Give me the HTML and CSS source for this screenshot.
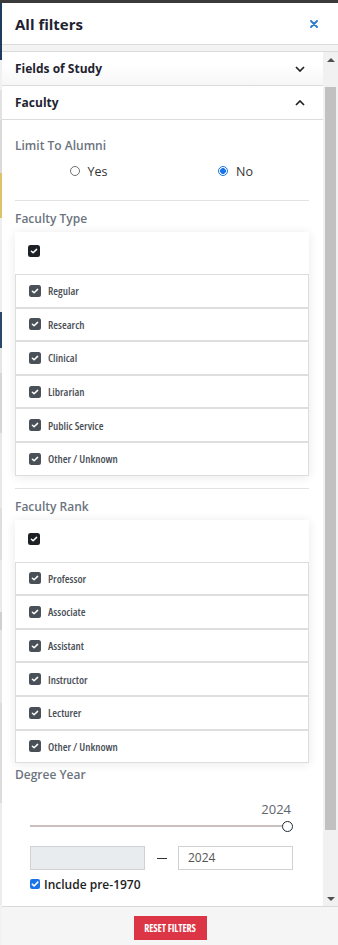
FILE: index.html
```html
<!DOCTYPE html>
<html lang="en">
<head>
<meta charset="utf-8">
<title>All filters</title>
<link rel="stylesheet" href="styles.css">
</head>
<body>
<div class="topbar"></div>
<div class="stage">
  <div class="backdrop"></div>
  <aside class="drawer">
    <header class="drawer-head">
      <h1 class="drawer-title">All filters</h1>
      <button class="close-btn" aria-label="Close">
        <svg width="8" height="8" viewBox="0 0 8 8"><path d="M1 1 L7 7 M7 1 L1 7" stroke="#2a78c8" stroke-width="1.8" stroke-linecap="round"/></svg>
      </button>
    </header>

    <div class="drawer-body">
      <div class="scroller">
        <div class="scroll-content">
          <div class="acc-row acc-closed">
            <span>Fields of Study</span>
            <svg class="chev" width="10" height="6" viewBox="0 0 10 6"><path d="M1 1 L5 5 L9 1" fill="none" stroke="#222" stroke-width="1.7"/></svg>
          </div>
          <div class="acc-row">
            <span>Faculty</span>
            <svg class="chev" width="10" height="6" viewBox="0 0 10 6"><path d="M1 5 L5 1 L9 5" fill="none" stroke="#222" stroke-width="1.7"/></svg>
          </div>

          <div class="acc-panel">
            <h2 class="group-label first">Limit To Alumni</h2>
            <div class="radios">
              <label class="radio-opt"><span class="radio"></span>Yes</label>
              <label class="radio-opt"><span class="radio on"></span>No</label>
            </div>

            <hr class="divider">

            <h2 class="group-label">Faculty Type</h2>
            <div class="check-box">
              <div class="check-all"><span class="cb dark"></span></div>
              <div class="check-row"><span class="cb"></span>Regular</div>
              <div class="check-row"><span class="cb"></span>Research</div>
              <div class="check-row"><span class="cb"></span>Clinical</div>
              <div class="check-row"><span class="cb"></span>Librarian</div>
              <div class="check-row"><span class="cb"></span>Public Service</div>
              <div class="check-row"><span class="cb"></span>Other / Unknown</div>
            </div>

            <hr class="divider second">

            <h2 class="group-label">Faculty Rank</h2>
            <div class="check-box">
              <div class="check-all"><span class="cb dark"></span></div>
              <div class="check-row"><span class="cb"></span>Professor</div>
              <div class="check-row"><span class="cb"></span>Associate</div>
              <div class="check-row"><span class="cb"></span>Assistant</div>
              <div class="check-row"><span class="cb"></span>Instructor</div>
              <div class="check-row"><span class="cb"></span>Lecturer</div>
              <div class="check-row"><span class="cb"></span>Other / Unknown</div>
            </div>

            <h2 class="group-label tight">Degree Year</h2>
            <div class="year-value">2024</div>
            <div class="slider">
              <div class="slider-track"></div>
              <div class="slider-thumb"></div>
            </div>
            <div class="year-inputs">
              <div class="year-input disabled"></div>
              <span class="dash"></span>
              <div class="year-input">2024</div>
            </div>
            <label class="pre-check"><span class="cb-blue"></span>Include pre-1970</label>
          </div>
        </div>

        <div class="scrollbar">
          <div class="sb-btn"><span class="tri up"></span></div>
          <div class="sb-track"><div class="sb-thumb"></div></div>
          <div class="sb-btn"><span class="tri down"></span></div>
        </div>
      </div>
    </div>

    <footer class="drawer-foot">
      <button class="reset-btn">RESET FILTERS</button>
    </footer>
  </aside>
</div>
</body>
</html>
```

FILE: styles.css
```css
* { box-sizing: border-box; }

html, body {
  margin: 0;
  padding: 0;
  width: 338px;
  height: 945px;
  overflow: hidden;
  font-family: "Open Sans", "Noto Sans", sans-serif;
  background: #ececec;
}

.topbar {
  height: 3px;
  background: #3a3a3a;
}

.stage {
  display: flex;
  height: 942px;
}

/* sliver of the page visible behind the drawer */
.backdrop {
  width: 2px;
  flex: none;
  background: linear-gradient(to bottom,
    #1d3c5e 0, #1d3c5e 57px,
    #f0f0f0 57px, #f0f0f0 87px,
    #e2e2e2 87px, #e2e2e2 117px,
    #dadada 117px, #dadada 170px,
    #dcc36a 170px, #dcc36a 215px,
    #efefef 215px, #efefef 309px,
    #2a4a6a 309px, #2a4a6a 345px,
    #e6e6e6 345px, #e6e6e6 370px,
    #d6d6d6 370px, #d6d6d6 430px,
    #e8e8e8 430px, #e8e8e8 505px,
    #dedede 505px, #dedede 557px,
    #eaeaea 557px, #eaeaea 609px,
    #cfcfcf 609px, #cfcfcf 627px,
    #e6e6e6 627px, #e6e6e6 700px,
    #dcdcdc 700px, #dcdcdc 800px,
    #ececec 800px, #ececec 902px,
    #f2f2f2 902px);
}

.drawer {
  flex: 1;
  display: flex;
  flex-direction: column;
  background: #fff;
}

/* header */
.drawer-head {
  height: 42px;
  flex: none;
  display: flex;
  align-items: center;
  justify-content: space-between;
  padding: 0 20px 0 13px;
  border-bottom: 1px solid #dcdcdc;
}

.drawer-title {
  margin: 0;
  font-size: 15px;
  font-weight: 700;
  color: #1e2230;
  line-height: 20px;
}

.close-btn {
  border: 0;
  background: none;
  padding: 0;
  width: 8px;
  height: 8px;
  display: flex;
}

/* body */
.drawer-body {
  flex: 1;
  min-height: 0;
  background: #f3f3f3;
  padding-top: 6px;
  display: flex;
  flex-direction: column;
}

.scroller {
  flex: 1;
  min-height: 0;
  display: flex;
  border-top: 1px solid #dadada;
  background: #fff;
}

.scroll-content {
  flex: 1;
  overflow: hidden;
}

.scrollbar {
  width: 15px;
  flex: none;
  display: flex;
  flex-direction: column;
  background: #f1f1f1;
}

.sb-btn {
  height: 15px;
  flex: none;
  display: flex;
  align-items: center;
  justify-content: center;
}

.tri {
  width: 0;
  height: 0;
  border-left: 4px solid transparent;
  border-right: 4px solid transparent;
}
.tri.up { border-bottom: 4px solid #505050; }
.tri.down { border-top: 4px solid #505050; }

.sb-track {
  flex: 1;
  padding: 20px 2px 0 2px;
}

.sb-thumb {
  height: 743px;
  background: #c1c1c1;
}

/* accordion rows */
.acc-row {
  height: 34px;
  display: flex;
  align-items: center;
  justify-content: space-between;
  padding: 0 18px 0 13px;
  border-bottom: 1px solid #dcdcdc;
  font-size: 12px;
  font-weight: 700;
  color: #1f2330;
}

.acc-closed {
  background: linear-gradient(to bottom, #ffffff 40%, #f6f6f6 100%);
}

.acc-panel {
  padding: 0 14px 0 13px;
}

.group-label {
  margin: 10px 0 0;
  font-size: 12px;
  line-height: 16px;
  font-weight: 600;
  color: #6c7480;
}
.group-label.first { margin-top: 18px; }
.group-label.tight { margin-top: 4px; }

/* radio pair */
.radios {
  display: flex;
  margin-top: 8px;
  height: 18px;
}

.radio-opt {
  flex: 1;
  display: flex;
  align-items: center;
  justify-content: center;
  font-size: 12.5px;
  color: #333;
}

.radio {
  width: 10px;
  height: 10px;
  border-radius: 50%;
  border: 1px solid #707070;
  margin-right: 8px;
  background: #fff;
}

.radio.on {
  border-color: #1a73e8;
  background: radial-gradient(circle, #1a73e8 0 2.6px, #fff 3.2px);
}

.divider {
  border: 0;
  border-top: 1px solid #e2e2e2;
  margin: 20px 0 0;
}
.divider.second { margin-top: 12px; }

/* checkbox lists */
.check-box {
  margin-top: 5px;
  background: #fff;
  box-shadow: 0 1px 10px rgba(0, 0, 0, 0.09);
}

.check-all {
  height: 42px;
  padding: 13px 0 0 13px;
}

.check-row {
  height: 33.6px;
  display: flex;
  align-items: center;
  padding-left: 13px;
  border: 1px solid #dedede;
  font-family: "Open Sans", sans-serif;
  font-stretch: 75%;
  font-weight: 600;
  font-size: 11px;
  color: #4a4f57;
}

.cb {
  width: 12px;
  height: 12px;
  flex: none;
  border-radius: 2.5px;
  background-color: #4a5058;
  margin-right: 7px;
  background-image: url("data:image/svg+xml,%3Csvg xmlns='http://www.w3.org/2000/svg' viewBox='0 0 12 12'%3E%3Cpath d='M3.4 6.2 L5.1 7.8 L8.6 4.4' fill='none' stroke='white' stroke-width='1.5' stroke-linecap='round' stroke-linejoin='round'/%3E%3C/svg%3E");
  background-size: 12px 12px;
}
.check-all .cb { display: block; }
.cb.dark { background-color: #1e2126; }

/* degree year */
.year-value {
  margin-top: 17px;
  text-align: right;
  padding-right: 18px;
  font-size: 13px;
  line-height: 18px;
  color: #5f6670;
}

.slider {
  position: relative;
  margin: 2px 16px 0 15px;
  height: 12px;
}

.slider-track {
  position: absolute;
  left: 0;
  right: 5px;
  top: 5px;
  height: 2px;
  background: #c9bfbf;
}

/* handle sits over the track end */
.slider-thumb {
  position: absolute;
  right: 0;
  top: 1px;
  width: 11px;
  height: 11px;
  border-radius: 50%;
  border: 1.5px solid #1e2a38;
  background: #fff;
}

.year-inputs {
  display: flex;
  align-items: center;
  margin: 14px 16px 0 15px;
  height: 24px;
}

.year-input {
  flex: 1;
  height: 24px;
  border: 1px solid #cfd3d6;
  background: #fff;
  font-size: 12px;
  line-height: 22px;
  padding-left: 9px;
  color: #555;
}

.year-input.disabled {
  background: #e9ecef;
}

.dash {
  width: 10px;
  height: 1px;
  background: #333;
  margin: 0 11px 0 12px;
}

.pre-check {
  display: flex;
  align-items: center;
  margin: 6px 0 0 15px;
  height: 16px;
  font-size: 12px;
  font-weight: 600;
  color: #222;
}

.cb-blue {
  width: 10px;
  height: 10px;
  border-radius: 2px;
  background-color: #1a73e8;
  margin-right: 4px;
  background-image: url("data:image/svg+xml,%3Csvg xmlns='http://www.w3.org/2000/svg' viewBox='0 0 10 10'%3E%3Cpath d='M2.3 5.2 L4.1 7 L7.8 3.1' fill='none' stroke='white' stroke-width='1.6' stroke-linecap='round' stroke-linejoin='round'/%3E%3C/svg%3E");
  background-size: 10px 10px;
}

/* footer */
.drawer-foot {
  height: 39px;
  flex: none;
  border-top: 1px solid #dadada;
  background: #f5f5f5;
  display: flex;
  justify-content: center;
  padding-top: 9px;
}

.reset-btn {
  width: 73px;
  height: 24px;
  border: 0;
  padding: 0;
  background: #dc3545;
  color: #fff;
  font-family: "Open Sans", sans-serif;
  font-stretch: 75%;
  font-weight: 700;
  font-size: 10px;
  letter-spacing: -0.1px;
}
```
